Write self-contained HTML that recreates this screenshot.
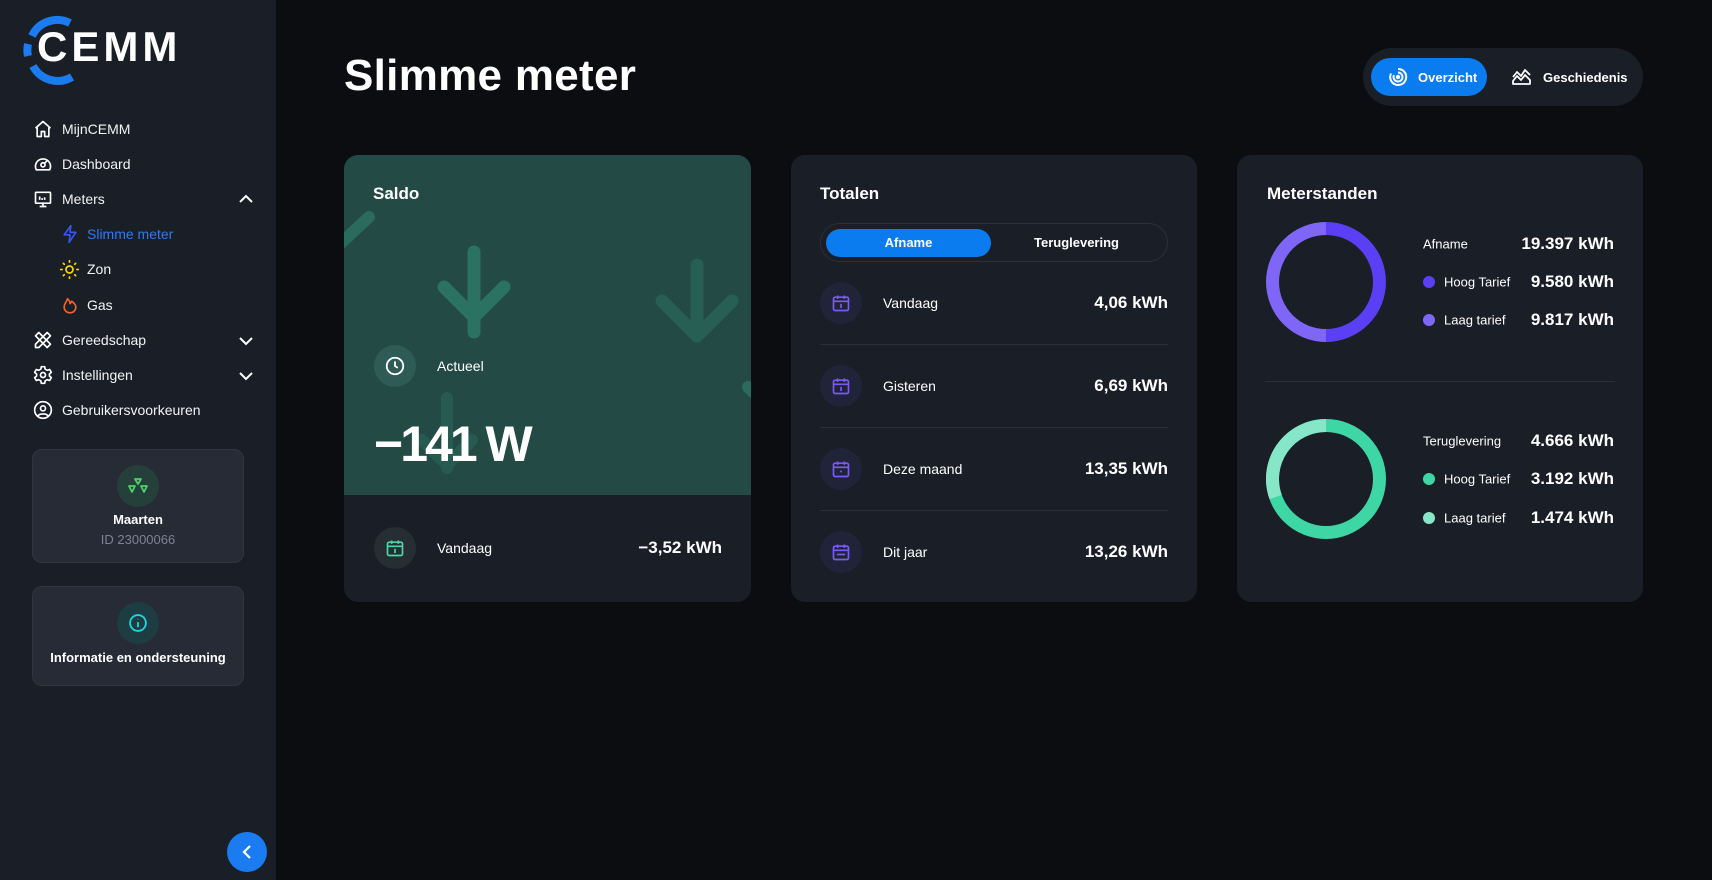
<!DOCTYPE html>
<html><head><meta charset="utf-8"><style>
*{box-sizing:border-box;margin:0;padding:0}
body{width:1712px;height:880px;background:#0c0d10;font-family:"Liberation Sans",sans-serif;color:#fff;position:relative;overflow:hidden}
.abs{position:absolute}
.side{left:0;top:0;width:276px;height:880px;background:#1a1e27}
.nav{position:absolute;left:0;font-size:14px;color:#f2f3f5;display:flex;align-items:center;height:24px;margin-top:-12px}
.nav svg{position:absolute}
.card{position:absolute;top:155px;width:407px;height:447px;border-radius:14px;background:#1a1e27;overflow:hidden}
.h{font-weight:bold;font-size:17px;position:absolute;top:184px}
.ic{position:absolute;width:42px;height:42px;border-radius:50%;display:flex;align-items:center;justify-content:center}
.lbl{position:absolute;font-size:14px;transform:translateY(-50%)}
.val{position:absolute;font-size:17px;font-weight:bold;transform:translateY(-50%);text-align:right}
.sep{position:absolute;height:1px;background:#2a2f3a}
</style></head><body>
<div class="abs side"></div>
<!-- logo -->
<svg class="abs" style="left:20px;top:14px" width="60" height="72" viewBox="0 0 60 72">
<path d="M50 9 A28 28 0 0 0 12 22" stroke="#1a7cf0" stroke-width="8" fill="none"/>
<path d="M8 30 A28 28 0 0 0 8 42" stroke="#1a7cf0" stroke-width="8" fill="none"/>
<path d="M13 52 A28 28 0 0 0 52 63" stroke="#1a7cf0" stroke-width="8" fill="none"/>
</svg>
<div class="abs" style="left:37px;top:22px;font-size:42px;font-weight:bold;letter-spacing:4px;line-height:50px">CEMM</div>
<!-- nav -->
<div class="nav" style="top:129px;left:62px">MijnCEMM</div>
<svg class="abs" style="left:33px;top:119px" width="20" height="20" viewBox="0 0 24 24" fill="none" stroke="#fff" stroke-width="2" stroke-linejoin="round"><path d="M3 11 12 3l9 8M5 9v12h5v-6h4v6h5V9"/></svg>
<div class="nav" style="top:164px;left:62px">Dashboard</div>
<svg class="abs" style="left:33px;top:154px" width="20" height="20" viewBox="0 0 24 24" fill="none" stroke="#fff" stroke-width="2"><path d="M4 19A9 9 0 1 1 20 19Z" stroke-linejoin="round"/><circle cx="12" cy="13" r="2.5"/><path d="M14 11l3-3"/></svg>
<div class="nav" style="top:199px;left:62px">Meters</div>
<svg class="abs" style="left:33px;top:189px" width="20" height="20" viewBox="0 0 24 24" fill="none" stroke="#fff" stroke-width="2"><rect x="3" y="4" width="18" height="13" rx="1"/><path d="M8 21h8M12 17v4M8 13V9M11 13v-2M14 13v-3"/></svg>
<svg class="abs" style="left:238px;top:192px" width="16" height="14" viewBox="0 0 16 14" fill="none" stroke="#fff" stroke-width="2"><path d="M2 10l6-6 6 6"/></svg>
<div class="nav" style="top:234px;left:87px;color:#2f7bf5">Slimme meter</div>
<svg class="abs" style="left:60px;top:224px" width="20" height="20" viewBox="0 0 24 24" fill="none" stroke="#3755f2" stroke-width="2" stroke-linejoin="round"><path d="M13 2 5 13h7l-1 9 8-12h-7z"/></svg>
<div class="nav" style="top:269px;left:87px">Zon</div>
<svg class="abs" style="left:59px;top:259px" width="21" height="21" viewBox="0 0 24 24" fill="none" stroke="#f5d20b" stroke-width="2"><circle cx="12" cy="12" r="4"/><path d="M12 2v1.5M12 20.5V22M2 12h1.5M20.5 12H22M5 5l1 1M18 18l1 1M5 19l1-1M18 6l1-1" stroke-linecap="round"/></svg>
<div class="nav" style="top:305px;left:87px">Gas</div>
<svg class="abs" style="left:60px;top:294px" width="20" height="21" viewBox="0 0 24 24" fill="none" stroke="#f2622b" stroke-width="2" stroke-linejoin="round"><path d="M12 22c-4 0-7-3-7-7 0-4 3-6 4-10 2 2 3 4 3 6 1-1 2-2 2-3 3 2 5 5 5 7 0 4-3 7-7 7z"/></svg>
<div class="nav" style="top:340px;left:62px">Gereedschap</div>
<svg class="abs" style="left:33px;top:330px" width="20" height="20" viewBox="0 0 24 24" fill="none" stroke="#fff" stroke-width="2" stroke-linejoin="round"><path d="M3 7l4-4 14 14-4 4zM17 3l4 4-14 14H3v-4z"/></svg>
<svg class="abs" style="left:238px;top:334px" width="16" height="14" viewBox="0 0 16 14" fill="none" stroke="#fff" stroke-width="2"><path d="M2 4l6 6 6-6"/></svg>
<div class="nav" style="top:375px;left:62px">Instellingen</div>
<svg class="abs" style="left:33px;top:365px" width="20" height="20" viewBox="0 0 24 24" fill="none" stroke="#fff" stroke-width="2"><circle cx="12" cy="12" r="3"/><path d="M10 2h4l.6 3 2.5 1.4 2.9-1 2 3.4-2.3 2v2.4l2.3 2-2 3.4-2.9-1L14.6 19 14 22h-4l-.6-3-2.5-1.4-2.9 1-2-3.4 2.3-2v-2.4l-2.3-2 2-3.4 2.9 1L9.4 5z" stroke-linejoin="round"/></svg>
<svg class="abs" style="left:238px;top:369px" width="16" height="14" viewBox="0 0 16 14" fill="none" stroke="#fff" stroke-width="2"><path d="M2 4l6 6 6-6"/></svg>
<div class="nav" style="top:410px;left:62px">Gebruikersvoorkeuren</div>
<svg class="abs" style="left:33px;top:400px" width="20" height="20" viewBox="0 0 24 24" fill="none" stroke="#fff" stroke-width="2"><circle cx="12" cy="12" r="10"/><circle cx="12" cy="10" r="3"/><path d="M6 19c2-3 10-3 12 0"/></svg>
<!-- user card -->
<div class="abs" style="left:32px;top:449px;width:212px;height:114px;background:#262b35;border:1px solid #30353f;border-radius:10px"></div>
<div class="ic" style="left:117px;top:465px;background:#25403a"><svg width="20" height="18" viewBox="0 0 20 18" fill="none" stroke="#4fcf6a" stroke-width="1.8" stroke-linejoin="round"><path d="M7 2h6l-3 5zM1 9h6l-3 6zM13 9h6l-3 6z"/></svg></div>
<div class="abs" style="left:32px;width:212px;top:512px;text-align:center;font-weight:bold;font-size:13px">Maarten</div>
<div class="abs" style="left:32px;width:212px;top:532px;text-align:center;font-size:13px;color:#7b8394">ID 23000066</div>
<div class="abs" style="left:32px;top:586px;width:212px;height:100px;background:#262b35;border:1px solid #30353f;border-radius:10px"></div>
<div class="ic" style="left:117px;top:602px;background:#1d3d43"><svg width="20" height="20" viewBox="0 0 24 24" fill="none" stroke="#19d6e0" stroke-width="2.2"><circle cx="12" cy="12" r="9.5"/><path d="M12 11v6M12 7v.5"/></svg></div>
<div class="abs" style="left:32px;width:212px;top:650px;text-align:center;font-weight:bold;font-size:13px">Informatie en ondersteuning</div>
<div class="abs" style="left:227px;top:832px;width:40px;height:40px;border-radius:50%;background:#1a7cf0;display:flex;align-items:center;justify-content:center"><svg width="12" height="16" viewBox="0 0 12 16" fill="none" stroke="#fff" stroke-width="2.2"><path d="M9 2 3 8l6 6"/></svg></div>
<!-- title -->
<div class="abs" style="left:344px;top:51px;font-size:44px;font-weight:bold;letter-spacing:0.3px;line-height:50px">Slimme meter</div>
<!-- toggle -->
<div class="abs" style="left:1363px;top:48px;width:280px;height:58px;border-radius:29px;background:#1a1e27"></div>
<div class="abs" style="left:1371px;top:58px;width:116px;height:38px;border-radius:19px;background:#0a7cf0"></div>
<svg class="abs" style="left:1388px;top:67px" width="20" height="20" viewBox="0 0 20 20" fill="none" stroke="#fff" stroke-width="2"><path d="M10 2a8 8 0 1 1-7 4.5"/><path d="M10 5.5a4.5 4.5 0 1 1-4 2.5"/><circle cx="10" cy="10" r="1.2" fill="#fff"/></svg>
<div class="abs" style="left:1418px;top:70px;font-size:13px;font-weight:bold">Overzicht</div>
<svg class="abs" style="left:1512px;top:67px" width="20" height="18" viewBox="0 0 20 18" fill="none" stroke="#fff" stroke-width="1.8" stroke-linejoin="round"><path d="M1 10l4-5 4 4 4-6 5 5M1 17v-3l4-5 4 4 4-5 5 5v4z"/></svg>
<div class="abs" style="left:1543px;top:70px;font-size:13px;font-weight:bold">Geschiedenis</div>
<!-- Saldo -->
<div class="card" style="left:344px">
 <div style="position:absolute;left:0;top:0;width:407px;height:340px;background:#234a45"></div>
 <svg style="position:absolute;left:0;top:0" width="407" height="340" fill="none" stroke-linecap="round" stroke-linejoin="round">
  <path d="M-5 90 25 62" stroke="#2b6b5c" stroke-width="12"/>
  <path d="M130 97v80M100 132l30 30 30-30" stroke="#2b7262" stroke-width="13"/>
  <path d="M353 110v70M318 146l35 35 35-35" stroke="#285f55" stroke-width="13"/>
  <path d="M103 243v70M78 285l25 25 25-25" stroke="#275a50" stroke-width="12"/>
  <path d="M404 232l5 5" stroke="#2b6b5c" stroke-width="12"/>
 </svg>
 <div class="ic" style="left:30px;top:190px;background:#2e5b55"><svg width="22" height="22" viewBox="0 0 24 24" fill="none" stroke="#fff" stroke-width="2"><circle cx="12" cy="12" r="9"/><path d="M12 7v5l3 2"/></svg></div>
 <div class="lbl" style="left:93px;top:211px">Actueel</div>
 <div style="position:absolute;left:30px;top:259px;font-size:50px;font-weight:bold;letter-spacing:-3px;line-height:60px">−141 W</div>
 <div class="ic" style="left:30px;top:372px;background:#262d33"><svg width="20" height="20" viewBox="0 0 24 24" fill="none" stroke="#4fd6a8" stroke-width="2"><rect x="3" y="5" width="18" height="16" rx="2"/><path d="M3 10h18M8 3v4M16 3v4M11 14h1v4"/></svg></div>
 <div class="lbl" style="left:93px;top:393px">Vandaag</div>
 <div class="val" style="right:29px;top:393px">−3,52 kWh</div>
</div>
<div class="h" style="left:373px">Saldo</div>
<!-- Totalen -->
<div class="card" style="left:791px;width:406px"></div>
<div class="h" style="left:820px">Totalen</div>
<div class="abs" style="left:820px;top:223px;width:348px;height:39px;border-radius:20px;border:1px solid #2b303a"></div>
<div class="abs" style="left:826px;top:229px;width:165px;height:28px;border-radius:14px;background:#0a7cf0;text-align:center;line-height:28px;font-size:13px;font-weight:bold">Afname</div>
<div class="abs" style="left:991px;top:229px;width:171px;height:28px;text-align:center;line-height:28px;font-size:13px;font-weight:bold">Teruglevering</div>
<svg width="0" height="0" style="position:absolute"><defs><g id="cal"><rect x="3" y="5" width="18" height="16" rx="2"/><path d="M3 10h18M8 3v4M16 3v4"/></g></defs></svg>
<div class="ic" style="left:820px;top:282px;background:#212339"><svg width="20" height="20" viewBox="0 0 24 24" fill="none" stroke="#7a5cf5" stroke-width="2"><use href="#cal"/><path d="M11 14h1v4"/></svg></div>
<div class="lbl" style="left:883px;top:303px">Vandaag</div><div class="val" style="right:544px;top:303px">4,06 kWh</div>
<div class="sep" style="left:820px;top:344px;width:348px"></div>
<div class="ic" style="left:820px;top:365px;background:#212339"><svg width="20" height="20" viewBox="0 0 24 24" fill="none" stroke="#7a5cf5" stroke-width="2"><use href="#cal"/><path d="M11 14h1v4"/></svg></div>
<div class="lbl" style="left:883px;top:386px">Gisteren</div><div class="val" style="right:544px;top:386px">6,69 kWh</div>
<div class="sep" style="left:820px;top:427px;width:348px"></div>
<div class="ic" style="left:820px;top:448px;background:#212339"><svg width="20" height="20" viewBox="0 0 24 24" fill="none" stroke="#7a5cf5" stroke-width="2"><use href="#cal"/><path d="M11 15h2"/></svg></div>
<div class="lbl" style="left:883px;top:469px">Deze maand</div><div class="val" style="right:544px;top:469px">13,35 kWh</div>
<div class="sep" style="left:820px;top:510px;width:348px"></div>
<div class="ic" style="left:820px;top:531px;background:#212339"><svg width="20" height="20" viewBox="0 0 24 24" fill="none" stroke="#7a5cf5" stroke-width="2"><use href="#cal"/><path d="M7 15h10"/></svg></div>
<div class="lbl" style="left:883px;top:552px">Dit jaar</div><div class="val" style="right:544px;top:552px">13,26 kWh</div>
<!-- Meterstanden -->
<div class="card" style="left:1237px;width:406px"></div>
<div class="h" style="left:1267px">Meterstanden</div>
<svg class="abs" style="left:1266px;top:222px" width="120" height="120" viewBox="0 0 120 120" fill="none" stroke-width="13">
 <path d="M60 6.5A53.5 53.5 0 0 0 60 113.5" stroke="#7f66f7"/>
 <path d="M60 6.5A53.5 53.5 0 0 1 60 113.5" stroke="#5b3ff5"/>
</svg>
<svg class="abs" style="left:1266px;top:419px" width="120" height="120" viewBox="0 0 120 120" fill="none" stroke-width="13">
 <circle cx="60" cy="60" r="53.5" stroke="#3ed6a4"/>
 <path d="M60 6.5A53.5 53.5 0 0 0 9.6 78" stroke="#86e6c8"/>
</svg>
<div class="lbl" style="left:1423px;top:244px;font-size:13px">Afname</div><div class="val" style="right:98px;top:244px">19.397 kWh</div>
<div class="abs" style="left:1423px;top:276px;width:12px;height:12px;border-radius:50%;background:#5b3ff5"></div>
<div class="lbl" style="left:1444px;top:282px;font-size:13px">Hoog Tarief</div><div class="val" style="right:98px;top:282px">9.580 kWh</div>
<div class="abs" style="left:1423px;top:314px;width:12px;height:12px;border-radius:50%;background:#7f66f7"></div>
<div class="lbl" style="left:1444px;top:320px;font-size:13px">Laag tarief</div><div class="val" style="right:98px;top:320px">9.817 kWh</div>
<div class="sep" style="left:1265px;top:381px;width:350px"></div>
<div class="lbl" style="left:1423px;top:441px;font-size:13px">Teruglevering</div><div class="val" style="right:98px;top:441px">4.666 kWh</div>
<div class="abs" style="left:1423px;top:473px;width:12px;height:12px;border-radius:50%;background:#3ed6a4"></div>
<div class="lbl" style="left:1444px;top:479px;font-size:13px">Hoog Tarief</div><div class="val" style="right:98px;top:479px">3.192 kWh</div>
<div class="abs" style="left:1423px;top:512px;width:12px;height:12px;border-radius:50%;background:#86e6c8"></div>
<div class="lbl" style="left:1444px;top:518px;font-size:13px">Laag tarief</div><div class="val" style="right:98px;top:518px">1.474 kWh</div>
</body></html>
